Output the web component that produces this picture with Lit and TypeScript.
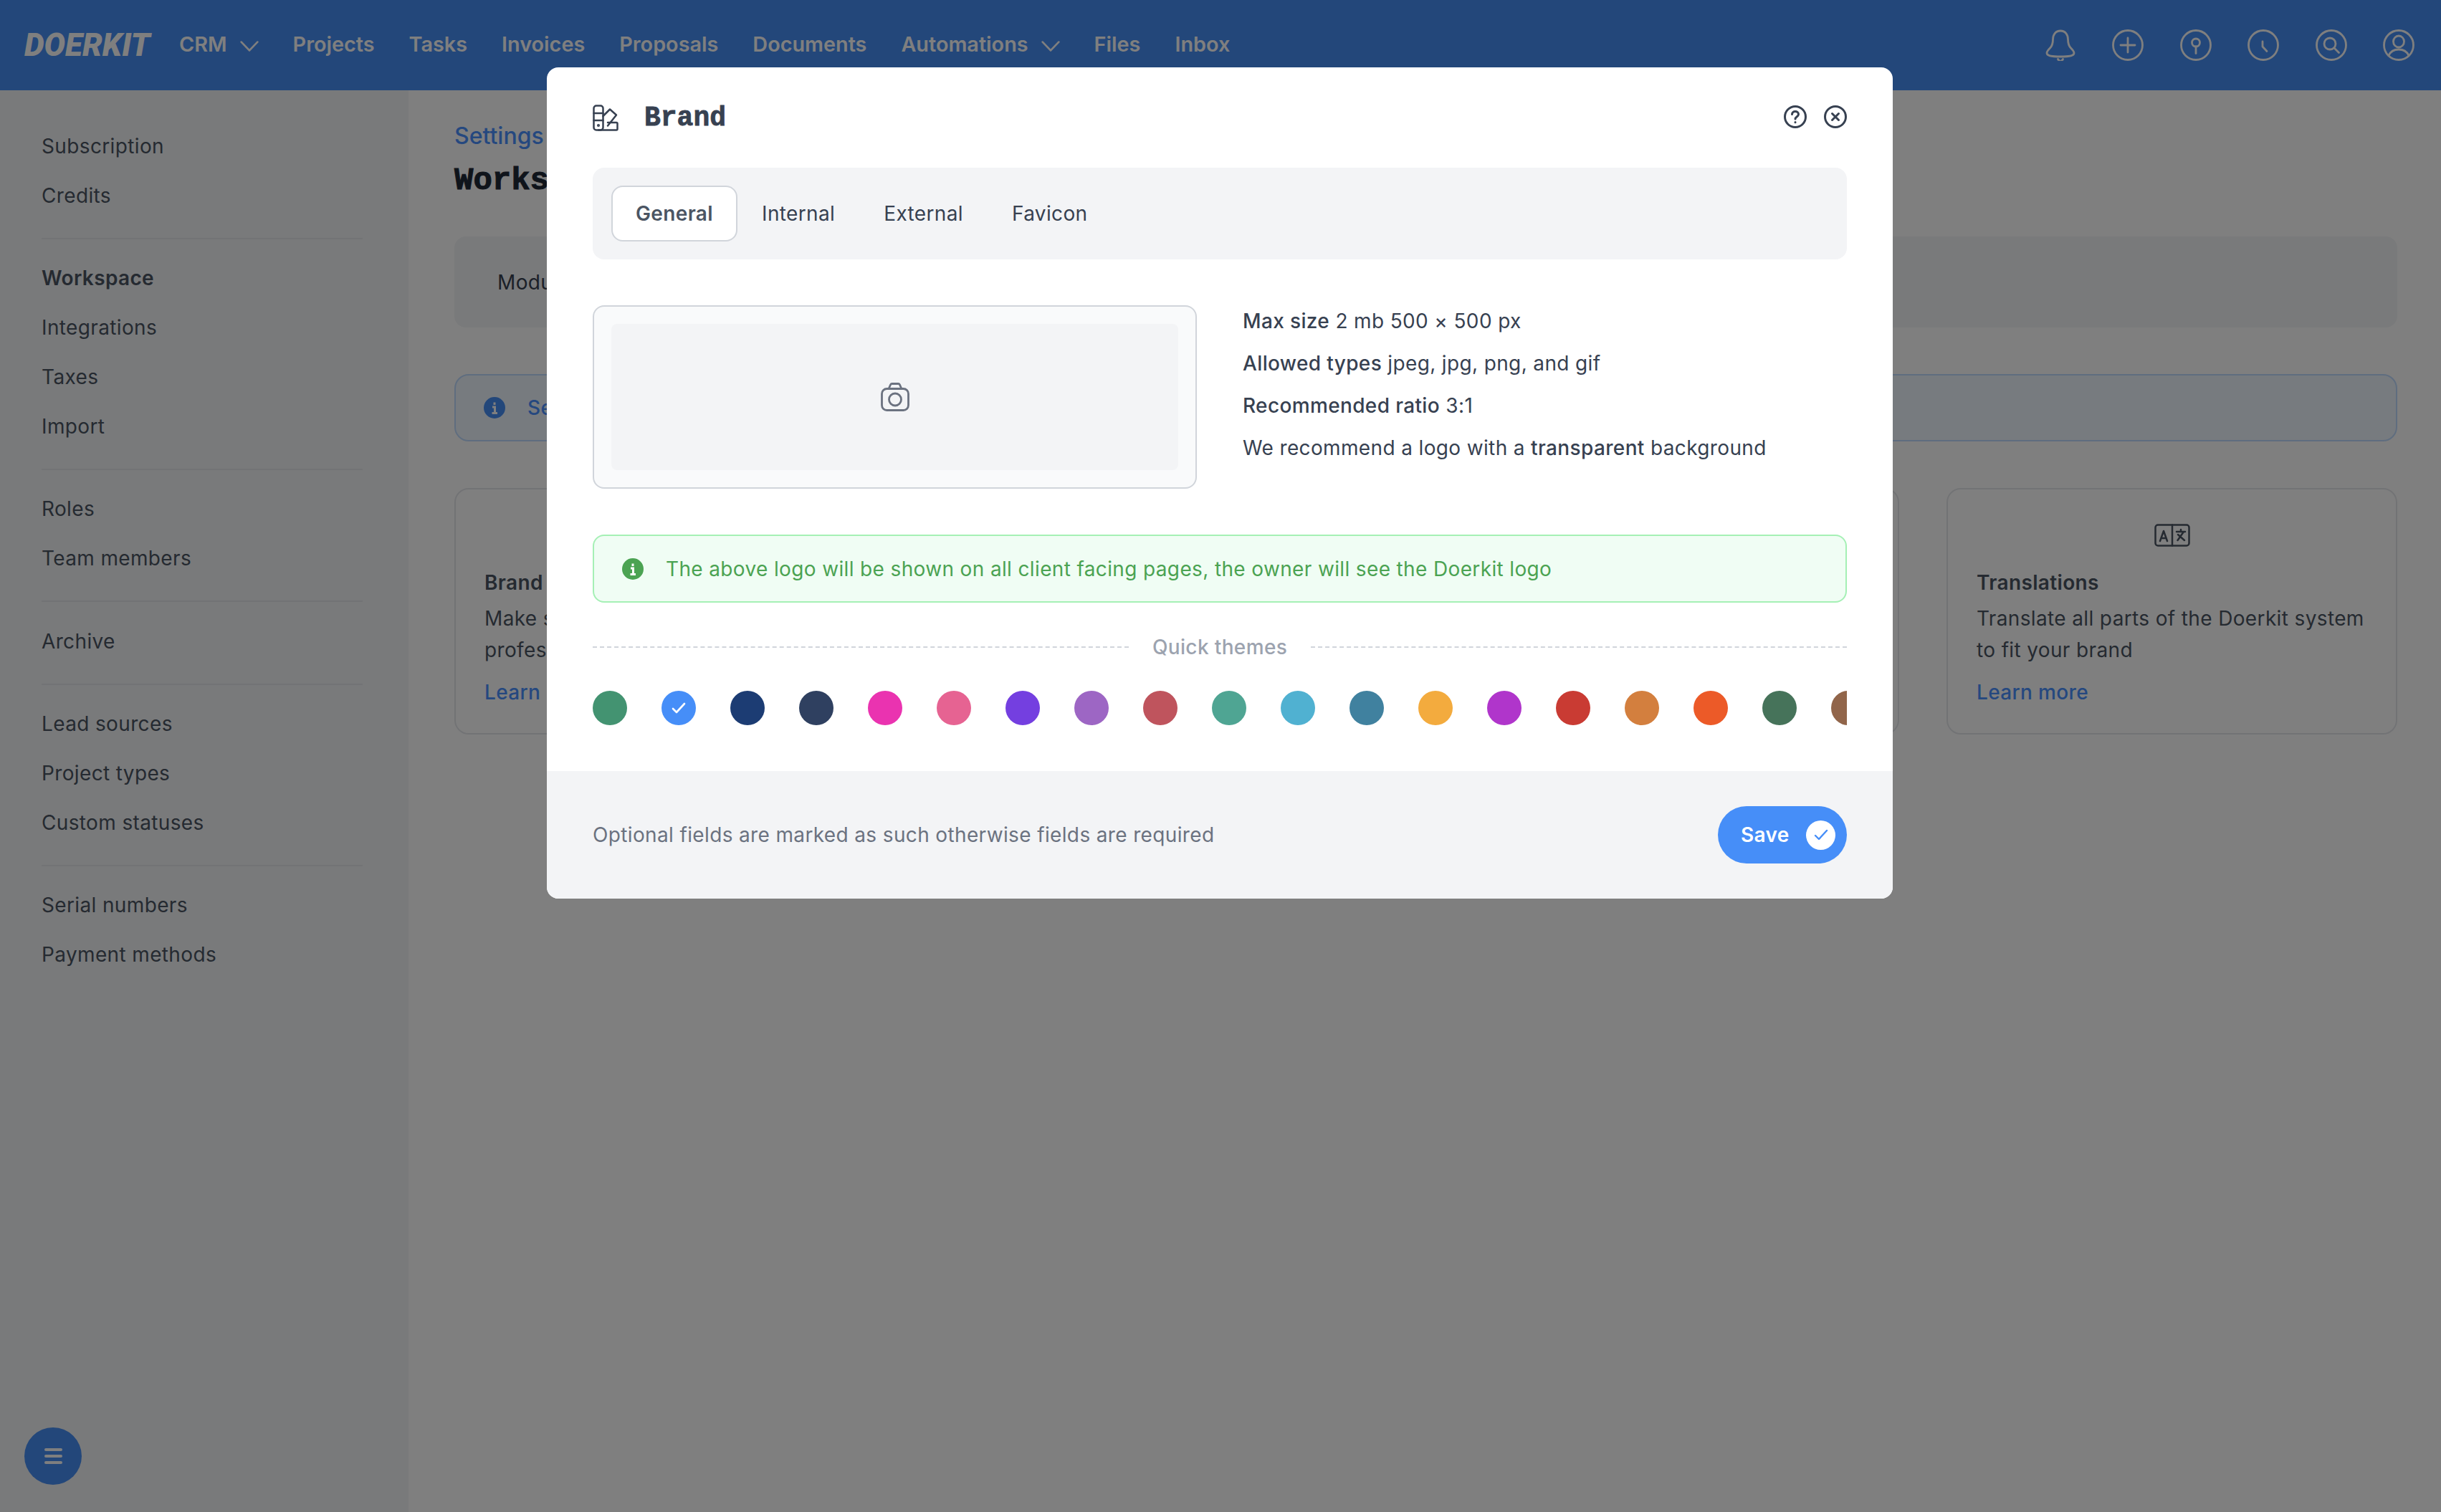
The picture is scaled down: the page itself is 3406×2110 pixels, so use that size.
import { LitElement, html, css, svg } from "lit";
import { customElement } from "lit/decorators.js";

const NAV = [
  { t: "CRM", c: true },
  { t: "Projects" },
  { t: "Tasks" },
  { t: "Invoices" },
  { t: "Proposals" },
  { t: "Documents" },
  { t: "Automations", c: true },
  { t: "Files" },
  { t: "Inbox" },
];

const SIDE = [
  [{ t: "Subscription" }, { t: "Credits" }],
  [{ t: "Workspace", b: true }, { t: "Integrations" }, { t: "Taxes" }, { t: "Import" }],
  [{ t: "Roles" }, { t: "Team members" }],
  [{ t: "Archive" }],
  [{ t: "Lead sources" }, { t: "Project types" }, { t: "Custom statuses" }],
  [{ t: "Serial numbers" }, { t: "Payment methods" }],
];

const SWATCHES = [
  "#439371", "#468ef8", "#1c3c73", "#2f4060", "#ea33b0", "#e66392", "#743fe0", "#9d66c4", "#bf545d", "#4fa593",
  "#50b1d1", "#40819f", "#f3ab3e", "#b035cb", "#c93b33", "#d37f3e", "#ec5a28", "#46735a", "#91654a",
];

const chevron = html`<svg class="chev" viewBox="0 0 24 14" fill="none" stroke="currentColor" stroke-width="2.6" stroke-linecap="round" stroke-linejoin="round"><path d="M1.5 1.5 12 12.5 22.5 1.5" /></svg>`;

const headIcons = [
  svg`<path d="M22 2c-7 0-10.500 5.500-10.500 12 0 5-.5 8.500-4 12-3 3-4.500 4.500-4.500 7 0 3.500 5 5 19 5s19-1.500 19-5c0-2.500-1.500-4-4.500-7-3.500-3.500-4-7-4-12C32.500 7.500 29 2 22 2Z"/><path d="M18.500 41.500c1 2 2 2.800 3.500 2.800s2.500-.8 3.500-2.800"/>`,
  svg`<ellipse cx="22" cy="22" rx="20.500" ry="20.500"/><path d="M22 12v20M12 22h20"/>`,
  svg`<ellipse cx="22" cy="22" rx="20.500" ry="20.500"/><circle cx="22" cy="18.500" r="5.500"/><path d="M22 24v9.500"/>`,
  svg`<ellipse cx="22" cy="22" rx="20.500" ry="20.500"/><path d="M21 17v7l6 6.500"/>`,
  svg`<ellipse cx="22" cy="22" rx="20.500" ry="20.500"/><circle cx="20" cy="20" r="8"/><path d="m26 26 6.500 6.500"/>`,
  svg`<ellipse cx="22" cy="22" rx="20.500" ry="20.500"/><ellipse cx="22" cy="17" rx="7.500" ry="8"/><path d="M8 36.500c2.500-5.500 8-8.500 14-8.500s11.500 3 14 8.500"/>`,
];

@customElement("app-root")
export class AppRoot extends LitElement {
  static styles = css`
    :host {
      display: block;
      position: relative;
      width: 3406px;
      height: 2110px;
      overflow: hidden;
      background: #fff;
      font-family: Inter, "Liberation Sans", sans-serif;
      font-size: 28px;
      line-height: 40px;
      letter-spacing: 0.36px;
      color: #4b5563;
    }
    * { box-sizing: border-box; }
    svg { display: block; flex: none; }

    /* top bar */
    .top {
      height: 126px;
      background: #468ef4;
      color: #fff;
      display: flex;
      align-items: center;
      padding: 0 37px 0 34px;
    }
    .logo {
      font-family: Roboto, Inter, sans-serif;
      font-weight: 900;
      font-style: italic;
      font-size: 44px;
      line-height: 44px;
      width: 216px;
      letter-spacing: 0;
      white-space: nowrap;
    }
    .nav { display: flex; gap: 48px; flex: 1; margin-top: -2px; }
    .nav a { display: flex; align-items: center; gap: 18px; font-weight: 600; font-size: 28.800px; letter-spacing: 0; white-space: nowrap; }
    .chev { width: 26px; height: 15px; margin-top: 4px; }
    .hicons { display: flex; gap: 50.500px; }
    .hicons svg { width: 44px; height: 44px; }

    .body { display: flex; height: 1984px; }

    /* sidebar */
    .side {
      position: relative;
      width: 570px;
      flex: none;
      background: #f3f4f6;
      padding: 58px 64px 0 58px;
    }
    .group { display: flex; flex-direction: column; gap: 29px; padding-bottom: 39px; margin-bottom: 34.200px; border-bottom: 2px solid #e5e7eb; }
    .group.end { border-bottom: 0; }
    .group a { white-space: nowrap; }
    .group a.b { font-weight: 600; }
    .fab {
      position: absolute;
      left: 34px;
      bottom: 38px;
      width: 80px;
      height: 80px;
      border-radius: 50%;
      background: #468ef4;
      display: flex;
      flex-direction: column;
      align-items: center;
      justify-content: center;
      gap: 5px;
    }
    .fab i { display: block; width: 25px; height: 4px; border-radius: 2px; background: #fff; }

    /* main */
    .main { flex: 1; padding: 44px 61px 0 64px; min-width: 0; }
    .crumb { font-size: 32px; font-weight: 500; color: #4a90ff; letter-spacing: 0; }
    .h1 {
      font-family: "Liberation Mono", monospace;
      font-weight: 700;
      font-size: 44px;
      line-height: 56px;
      letter-spacing: 0;
      -webkit-text-stroke: 1px #1f2937;
      color: #1f2937;
      margin: 14px 0 50px;
    }
    .modules {
      height: 127px;
      background: #f3f4f6;
      border-radius: 16px;
      display: flex;
      align-items: center;
      padding: 0 60px;
      color: #374151;
    }
    .binfo {
      height: 94px;
      margin-top: 65px;
      border: 2px solid #bfdbfe;
      background: #eff6ff;
      border-radius: 20px;
      display: flex;
      align-items: center;
      gap: 31px;
      padding: 0 39px;
      color: #4a90ff;
      font-weight: 500;
    }
    .cards { display: grid; grid-template-columns: repeat(3, 628px) 629px; gap: 66px; margin-top: 65px; }
    .card {
      position: relative;
      height: 344px;
      border: 2px solid #e5e7eb;
      border-radius: 20px;
      padding: 110px 40px 0;
    }
    .card .ic { position: absolute; left: 288px; top: 48px; }
    .card b { display: block; font-weight: 600; }
    .card p { margin: 9px 0 0; line-height: 43.500px; }
    .card .lm { display: block; margin-top: 17px; color: #4a90ff; font-weight: 500; }

    /* overlay and modal */
    .overlay {
      position: absolute;
      inset: 0;
      background: rgba(0, 0, 0, 0.5);
      display: flex;
      justify-content: center;
      align-items: flex-start;
      padding: 94px 2px 0 0;
    }
    .modal {
      width: 1878px;
      height: 1160px;
      background: #fff;
      border-radius: 16px;
      overflow: hidden;
      display: flex;
      flex-direction: column;
      color: #374151;
    }
    .mbody { flex: 1; padding: 0 64px; min-height: 0; }
    .mhead { height: 140px; display: flex; align-items: center; }
    .mhead .t {
      font-family: "Liberation Mono", monospace;
      font-weight: 700;
      font-size: 38px;
      letter-spacing: 0;
      -webkit-text-stroke: 0.8px #374151;
      margin: 1px 0 0 36px;
      flex: 1;
      color: #374151;
    }
    .mhead .acts { display: flex; gap: 24px; margin-top: -2px; }
    .tabs {
      height: 128px;
      background: #f3f4f6;
      border-radius: 16px;
      display: flex;
      align-items: center;
      padding: 0 26px;
    }
    .tab { height: 78px; padding: 0 32px; border: 2px solid transparent; border-radius: 16px; display: flex; align-items: center; }
    .tab.on { background: #fff; border-color: #d1d5db; font-weight: 600; color: #4b5563; }
    .two { display: grid; grid-template-columns: 843px 843px; gap: 64px; margin-top: 64px; }
    .logo-box { height: 256px; border: 2px solid #d1d5db; border-radius: 16px; background: #f9fafb; padding: 24px; }
    .logo-in { height: 100%; background: #f3f4f6; border-radius: 8px; display: flex; align-items: center; justify-content: center; }
    .rules { display: flex; flex-direction: column; gap: 19px; padding-top: 2px; }
    .rules div { white-space: nowrap; }
    .rules b { font-weight: 500; }
    .galert {
      height: 95px;
      margin-top: 64px;
      border: 2px solid #a5f0b5;
      background: #f0fdf4;
      border-radius: 16px;
      display: flex;
      align-items: center;
      gap: 31px;
      padding: 0 0 0 39px;
      color: #4ba352;
      white-space: nowrap;
    }
    .sep { display: flex; align-items: center; gap: 33px; margin-top: 42px; color: #9ca3af; font-weight: 500; }
    .sep i { flex: 1; border-top: 2px dashed #d1d5db; }
    .swatches { display: flex; gap: 48px; overflow: hidden; margin-top: 41px; }
    .sw { width: 48px; height: 48px; border-radius: 50%; flex: none; display: flex; align-items: center; justify-content: center; }
    .mfoot {
      height: 178px;
      background: #f3f4f6;
      display: flex;
      align-items: center;
      justify-content: space-between;
      padding: 0 64px;
      color: #6b7280;
    }
    .save {
      height: 80px;
      width: 180px;
      border: 0;
      border-radius: 40px;
      background: #468ef8;
      color: #fff;
      font: inherit;
      font-weight: 600;
      letter-spacing: inherit;
      display: flex;
      align-items: center;
      justify-content: space-between;
      padding: 0 16px 0 32px;
    }
    .save span { width: 41px; height: 41px; border-radius: 50%; background: #fff; display: flex; align-items: center; justify-content: center; }
  `;

  private info(bg: string, size: number) {
    return html`<svg width=${size} height=${size} viewBox="0 0 30 30"><circle cx="15" cy="15" r="15" fill=${bg}/><path d="M15 7.500v3.500M12 14h3.500v8M11.500 22.500h7.500" fill="none" stroke="#fff" stroke-width="3"/></svg>`;
  }

  render() {
    return html`
      <div class="top">
        <div class="logo">DOERKIT</div>
        <nav class="nav">
          ${NAV.map((n) => html`<a>${n.t}${n.c ? chevron : ""}</a>`)}
        </nav>
        <div class="hicons">
          ${headIcons.map(
            (p) => html`<svg viewBox="0 0 44 44" fill="none" stroke="#fff" stroke-width="2.800" stroke-linecap="round" stroke-linejoin="round">${p}</svg>`
          )}
        </div>
      </div>
      <div class="body">
        <aside class="side">
          ${SIDE.map(
            (g, idx) => html`<div class="group ${idx === SIDE.length - 1 ? "end" : ""}">${g.map((i: any) => html`<a class=${i.b ? "b" : ""}>${i.t}</a>`)}</div>`
          )}
          <div class="fab"><i></i><i></i><i></i></div>
        </aside>
        <main class="main">
          <div class="crumb">Settings</div>
          <div class="h1">Workspace</div>
          <div class="modules">Modules</div>
          <div class="binfo">${this.info("#468ef4", 30)}<span>Settings</span></div>
          <div class="cards">
            <div class="card">
              <b>Brand</b>
              <p>Make sure your pages look<br />professional</p>
              <a class="lm">Learn more</a>
            </div>
            <div class="card"></div>
            <div class="card"></div>
            <div class="card">
              <svg class="ic" width="50" height="32" viewBox="0 0 50 32" fill="none" stroke="#4b5563" stroke-width="2.500" stroke-linecap="round" stroke-linejoin="round">
                <rect x="1.500" y="1.500" width="47" height="29" rx="3.500"/>
                <path d="M25 1.500v29M8 24l5-14 5 14M9.800 20h6.400M31 11h12M37 8v3M41 11l-8.500 12M33 15l9 8"/>
              </svg>
              <b>Translations</b>
              <p>Translate all parts of the Doerkit system<br />to fit your brand</p>
              <a class="lm">Learn more</a>
            </div>
          </div>
        </main>
      </div>

      <div class="overlay">
        <section class="modal">
          <div class="mbody">
            <div class="mhead">
              <svg width="36" height="37" viewBox="0 0 36 37" fill="none" stroke="#374151" stroke-width="2.500" stroke-linecap="round" stroke-linejoin="round">
                <path d="M1.500 5a3.500 3.500 0 0 1 3.500-3.500h6a3.500 3.500 0 0 1 3.500 3.500v27a3.500 3.500 0 0 1-3.500 3.500H5A3.500 3.500 0 0 1 1.500 32Z"/>
                <path d="M1.500 12h13M1.500 22h13"/>
                <path d="M14.500 16 24 6.500l9 8-12 15"/>
                <path d="M21 25h12a1.500 1.500 0 0 1 1.500 1.500v7.500a1.500 1.500 0 0 1-1.500 1.500H8"/>
                <circle cx="8" cy="29" r=".8" fill="#374151"/>
              </svg>
              <div class="t">Brand</div>
              <div class="acts">
                <svg width="32" height="32" viewBox="0 0 32 32" fill="none" stroke="#374151" stroke-width="3" stroke-linecap="round" stroke-linejoin="round"><circle cx="16" cy="16" r="14.500"/><path d="M11.500 12.500c0-2.500 2-4 4.500-4s4.500 1.500 4.500 4c0 3.500-4.500 3.500-4.500 6.500"/><path d="M16 23.500v.2"/></svg>
                <svg width="32" height="32" viewBox="0 0 32 32" fill="none" stroke="#374151" stroke-width="3" stroke-linecap="round" stroke-linejoin="round"><circle cx="16" cy="16" r="14.500"/><path d="m11.500 11.500 9 9M20.500 11.500l-9 9"/></svg>
              </div>
            </div>
            <div class="tabs">
              <div class="tab on">General</div>
              <div class="tab">Internal</div>
              <div class="tab">External</div>
              <div class="tab">Favicon</div>
            </div>
            <div class="two">
              <div class="logo-box">
                <div class="logo-in">
                  <svg width="40" height="40" viewBox="0 0 40 40" fill="none" stroke="#6b7280" stroke-width="2.800" stroke-linecap="round" stroke-linejoin="round">
                    <rect x="1.500" y="8.500" width="37" height="30" rx="7"/>
                    <path d="M11 8.500 13.500 3a2 2 0 0 1 2-1.500h9a2 2 0 0 1 2 1.500L29 8.500"/>
                    <circle cx="20" cy="23.500" r="8.500"/>
                  </svg>
                </div>
              </div>
              <div class="rules">
                <div><b>Max size</b> 2 mb 500 × 500 px</div>
                <div><b>Allowed types</b> jpeg, jpg, png, and gif</div>
                <div><b>Recommended ratio</b> 3:1</div>
                <div>We recommend a logo with a <b>transparent</b> background</div>
              </div>
            </div>
            <div class="galert">
              ${this.info("#4ba352", 30)}
              <span>The above logo will be shown on all client facing pages, the owner will see the Doerkit logo</span>
            </div>
            <div class="sep"><i></i><span>Quick themes</span><i></i></div>
            <div class="swatches">
              ${SWATCHES.map(
                (c, i) => html`<div class="sw" style="background:${c}">
                  ${i === 1
                    ? html`<svg width="22" height="22" viewBox="0 0 22 22" fill="none" stroke="#fff" stroke-width="2.600" stroke-linecap="round" stroke-linejoin="round"><path d="m3 12 5 5L19 5"/></svg>`
                    : ""}
                </div>`
              )}
            </div>
          </div>
          <footer class="mfoot">
            <div>Optional fields are marked as such otherwise fields are required</div>
            <button class="save">
              Save
              <span><svg width="22" height="22" viewBox="0 0 22 22" fill="none" stroke="#468ef8" stroke-width="2.400" stroke-linecap="round" stroke-linejoin="round"><path d="m3 12 5 5L19 5"/></svg></span>
            </button>
          </footer>
        </section>
      </div>
    `;
  }
}
